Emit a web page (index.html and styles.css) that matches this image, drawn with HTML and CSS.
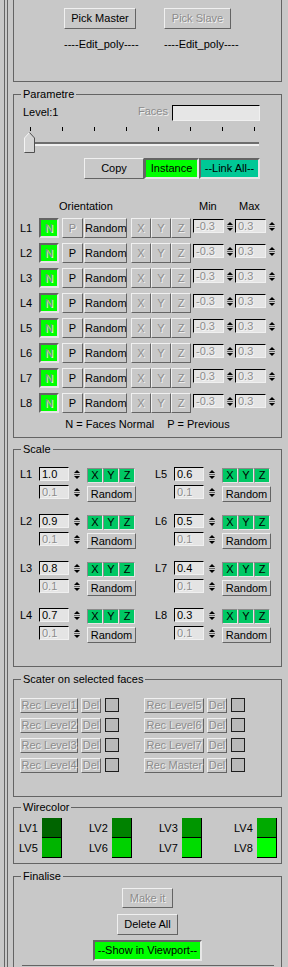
FILE: index.html
```html
<!DOCTYPE html>
<html lang="en">
<head>
<meta charset="UTF-8" />
<meta name="viewport" content="width=device-width, initial-scale=1" />
<title>Scatter Levels</title>
<link rel="stylesheet" href="styles.css">
</head>
<body>
<div class="rollout">
<div class="rollout-inner">

  <div class="group group-top">
    <div class="pick-row">
      <div class="pick-col">
        <button class="btn pick-master">Pick Master</button>
        <span class="pick-name">----Edit_poly----</span>
      </div>
      <div class="pick-col">
        <button class="btn pick-slave" disabled>Pick Slave</button>
        <span class="pick-name">----Edit_poly----</span>
      </div>
    </div>
  </div>

  <div class="group group-param">
    <span class="group-title">Parametre</span>
    <div class="level-row">
      <span class="level-label">Level:1</span>
      <span class="faces-label">Faces</span>
      <span class="faces-box"></span>
    </div>
    <div class="ticks"><i></i><i></i><i></i><i></i><i></i><i></i><i></i><i></i></div>
    <div class="slider">
      <svg class="thumb" width="11" height="21" viewBox="0 0 11 21">
        <path d="M0.5 20.5V6L5.5 0.5L10.5 6V20.5Z" fill="#d4d4d4"/>
        <path d="M0.5 20V6L5.5 0.5" fill="none" stroke="#f4f4f4"/>
        <path d="M5.5 0.5L10.5 6V20.5H0.5" fill="none" stroke="#505050"/>
      </svg>
      <div class="track"></div>
    </div>
    <div class="mode-row">
      <button class="btn copy">Copy</button>
      <button class="btn on instance">Instance</button>
      <button class="btn on link-all">--Link All--</button>
    </div>
    <div class="orient-head">
      <span class="h-orient">Orientation</span>
      <span class="h-min">Min</span>
      <span>Max</span>
    </div>
    <div class="orows">
      <div class="orow">
        <span class="lbl">L1</span>
        <button class="btn on n" disabled>N</button>
        <button class="btn p" disabled>P</button>
        <button class="btn rnd">Random</button>
        <button class="btn ax" disabled>X</button><button class="btn ax" disabled>Y</button><button class="btn ax" disabled>Z</button>
        <span class="field off">-0.3</span><span class="spin"></span>
        <span class="field off">0.3</span><span class="spin"></span>
      </div>
      <div class="orow">
        <span class="lbl">L2</span>
        <button class="btn on n" disabled>N</button>
        <button class="btn p">P</button>
        <button class="btn rnd">Random</button>
        <button class="btn ax" disabled>X</button><button class="btn ax" disabled>Y</button><button class="btn ax" disabled>Z</button>
        <span class="field off">-0.3</span><span class="spin"></span>
        <span class="field off">0.3</span><span class="spin"></span>
      </div>
      <div class="orow">
        <span class="lbl">L3</span>
        <button class="btn on n" disabled>N</button>
        <button class="btn p">P</button>
        <button class="btn rnd">Random</button>
        <button class="btn ax" disabled>X</button><button class="btn ax" disabled>Y</button><button class="btn ax" disabled>Z</button>
        <span class="field off">-0.3</span><span class="spin"></span>
        <span class="field off">0.3</span><span class="spin"></span>
      </div>
      <div class="orow">
        <span class="lbl">L4</span>
        <button class="btn on n" disabled>N</button>
        <button class="btn p">P</button>
        <button class="btn rnd">Random</button>
        <button class="btn ax" disabled>X</button><button class="btn ax" disabled>Y</button><button class="btn ax" disabled>Z</button>
        <span class="field off">-0.3</span><span class="spin"></span>
        <span class="field off">0.3</span><span class="spin"></span>
      </div>
      <div class="orow">
        <span class="lbl">L5</span>
        <button class="btn on n" disabled>N</button>
        <button class="btn p">P</button>
        <button class="btn rnd">Random</button>
        <button class="btn ax" disabled>X</button><button class="btn ax" disabled>Y</button><button class="btn ax" disabled>Z</button>
        <span class="field off">-0.3</span><span class="spin"></span>
        <span class="field off">0.3</span><span class="spin"></span>
      </div>
      <div class="orow">
        <span class="lbl">L6</span>
        <button class="btn on n" disabled>N</button>
        <button class="btn p">P</button>
        <button class="btn rnd">Random</button>
        <button class="btn ax" disabled>X</button><button class="btn ax" disabled>Y</button><button class="btn ax" disabled>Z</button>
        <span class="field off">-0.3</span><span class="spin"></span>
        <span class="field off">0.3</span><span class="spin"></span>
      </div>
      <div class="orow">
        <span class="lbl">L7</span>
        <button class="btn on n" disabled>N</button>
        <button class="btn p">P</button>
        <button class="btn rnd">Random</button>
        <button class="btn ax" disabled>X</button><button class="btn ax" disabled>Y</button><button class="btn ax" disabled>Z</button>
        <span class="field off">-0.3</span><span class="spin"></span>
        <span class="field off">0.3</span><span class="spin"></span>
      </div>
      <div class="orow">
        <span class="lbl">L8</span>
        <button class="btn on n" disabled>N</button>
        <button class="btn p">P</button>
        <button class="btn rnd">Random</button>
        <button class="btn ax" disabled>X</button><button class="btn ax" disabled>Y</button><button class="btn ax" disabled>Z</button>
        <span class="field off">-0.3</span><span class="spin"></span>
        <span class="field off">0.3</span><span class="spin"></span>
      </div>
    </div>
    <div class="note"><span>N = Faces Normal</span><span>P = Previous</span></div>
  </div>

  <div class="group group-scale">
    <span class="group-title">Scale</span>
    <div class="scale-grid">
      <div class="sblock">
        <div class="srow"><span class="slbl">L1</span><span class="field sval">1.0</span><span class="spin"></span>
          <div class="xyz"><button class="btn g">X</button><button class="btn g">Y</button><button class="btn g">Z</button></div></div>
        <div class="srow srow2"><span class="field sval off">0.1</span><span class="spin"></span><button class="btn srnd">Random</button></div>
      </div>
      <div class="sblock">
        <div class="srow"><span class="slbl">L5</span><span class="field sval">0.6</span><span class="spin"></span>
          <div class="xyz"><button class="btn g">X</button><button class="btn g">Y</button><button class="btn g">Z</button></div></div>
        <div class="srow srow2"><span class="field sval off">0.1</span><span class="spin"></span><button class="btn srnd">Random</button></div>
      </div>
      <div class="sblock">
        <div class="srow"><span class="slbl">L2</span><span class="field sval">0.9</span><span class="spin"></span>
          <div class="xyz"><button class="btn g">X</button><button class="btn g">Y</button><button class="btn g">Z</button></div></div>
        <div class="srow srow2"><span class="field sval off">0.1</span><span class="spin"></span><button class="btn srnd">Random</button></div>
      </div>
      <div class="sblock">
        <div class="srow"><span class="slbl">L6</span><span class="field sval">0.5</span><span class="spin"></span>
          <div class="xyz"><button class="btn g">X</button><button class="btn g">Y</button><button class="btn g">Z</button></div></div>
        <div class="srow srow2"><span class="field sval off">0.1</span><span class="spin"></span><button class="btn srnd">Random</button></div>
      </div>
      <div class="sblock">
        <div class="srow"><span class="slbl">L3</span><span class="field sval">0.8</span><span class="spin"></span>
          <div class="xyz"><button class="btn g">X</button><button class="btn g">Y</button><button class="btn g">Z</button></div></div>
        <div class="srow srow2"><span class="field sval off">0.1</span><span class="spin"></span><button class="btn srnd">Random</button></div>
      </div>
      <div class="sblock">
        <div class="srow"><span class="slbl">L7</span><span class="field sval">0.4</span><span class="spin"></span>
          <div class="xyz"><button class="btn g">X</button><button class="btn g">Y</button><button class="btn g">Z</button></div></div>
        <div class="srow srow2"><span class="field sval off">0.1</span><span class="spin"></span><button class="btn srnd">Random</button></div>
      </div>
      <div class="sblock">
        <div class="srow"><span class="slbl">L4</span><span class="field sval">0.7</span><span class="spin"></span>
          <div class="xyz"><button class="btn g">X</button><button class="btn g">Y</button><button class="btn g">Z</button></div></div>
        <div class="srow srow2"><span class="field sval off">0.1</span><span class="spin"></span><button class="btn srnd">Random</button></div>
      </div>
      <div class="sblock">
        <div class="srow"><span class="slbl">L8</span><span class="field sval">0.3</span><span class="spin"></span>
          <div class="xyz"><button class="btn g">X</button><button class="btn g">Y</button><button class="btn g">Z</button></div></div>
        <div class="srow srow2"><span class="field sval off">0.1</span><span class="spin"></span><button class="btn srnd">Random</button></div>
      </div>
    </div>
  </div>

  <div class="group group-scater">
    <span class="group-title">Scater on selected faces</span>
    <div class="rec-grid">
      <div class="rec"><button class="btn rec-btn" disabled>Rec Level1</button><button class="btn del" disabled>Del</button><span class="chk"></span></div>
      <div class="rec"><button class="btn rec-btn" disabled>Rec Level5</button><button class="btn del" disabled>Del</button><span class="chk"></span></div>
      <div class="rec"><button class="btn rec-btn" disabled>Rec Level2</button><button class="btn del" disabled>Del</button><span class="chk"></span></div>
      <div class="rec"><button class="btn rec-btn" disabled>Rec Level6</button><button class="btn del" disabled>Del</button><span class="chk"></span></div>
      <div class="rec"><button class="btn rec-btn" disabled>Rec Level3</button><button class="btn del" disabled>Del</button><span class="chk"></span></div>
      <div class="rec"><button class="btn rec-btn" disabled>Rec Level7</button><button class="btn del" disabled>Del</button><span class="chk"></span></div>
      <div class="rec"><button class="btn rec-btn" disabled>Rec Level4</button><button class="btn del" disabled>Del</button><span class="chk"></span></div>
      <div class="rec"><button class="btn rec-btn" disabled>Rec Master</button><button class="btn del" disabled>Del</button><span class="chk"></span></div>
    </div>
  </div>

  <div class="group group-wire">
    <span class="group-title">Wirecolor</span>
    <div class="wire-row">
      <div class="wcol"><span>LV1</span><span class="sw lv1"></span><span>LV5</span><span class="sw lv5"></span></div>
      <div class="wcol"><span>LV2</span><span class="sw lv2"></span><span>LV6</span><span class="sw lv6"></span></div>
      <div class="wcol wide"><span>LV3</span><span class="sw lv3"></span><span>LV7</span><span class="sw lv7"></span></div>
      <div class="wcol last"><span>LV4</span><span class="sw lv4"></span><span>LV8</span><span class="sw lv8"></span></div>
    </div>
  </div>

  <div class="group group-final">
    <span class="group-title">Finalise</span>
    <div class="final-col">
      <button class="btn make" disabled>Make it</button>
      <button class="btn delete-all">Delete All</button>
      <button class="btn on show">--Show in Viewport--</button>
      <div class="progress"></div>
    </div>
  </div>

</div>
</div>
</body>
</html>
```

FILE: styles.css
```css
* {
  box-sizing: border-box;
}
body {
  margin: 0;
  background: #c8c8c8;
  font-family: "Liberation Sans", Arial, sans-serif;
  font-size: 11px;
  line-height: 13px;
  color: #000;
  overflow: hidden;
}

/* rollout frame */
.rollout {
  margin-left: 4px;
  padding-left: 2px;
  border-left: 1px solid #646464;
  min-height: 967px;
}
.rollout-inner {
  padding: 0 6px 0 5px;
  border-left: 1px solid #646464;
  min-height: 967px;
}

/* group boxes */
.group {
  position: relative;
  border: 1px solid #646464;
}
.group-title {
  position: absolute;
  top: -7px;
  left: 7px;
  padding: 0 2px;
  background: #c8c8c8;
  white-space: nowrap;
}
.group-top {
  border-top: none;
  height: 82px;
}
.group-param {
  margin-top: 12px;
  height: 344px;
  padding-top: 10px;
}
.group-scale {
  margin-top: 11px;
  height: 218px;
  padding-top: 17px;
}
.group-scater {
  margin-top: 12px;
  height: 118px;
  padding-top: 18px;
}
.group-wire {
  margin-top: 10px;
  height: 57px;
  padding-top: 10px;
}
.group-final {
  margin-top: 12px;
  height: 130px;
  padding-top: 11px;
}

/* buttons */
.btn {
  height: 21px;
  margin: 0;
  padding: 0;
  font: inherit;
  line-height: 13px;
  color: #000;
  background: #c8c8c8;
  border: 1px solid;
  border-color: #f0f0f0 #646464 #646464 #f0f0f0;
  white-space: nowrap;
  overflow: visible;
}
.btn:disabled {
  color: #8c8c8c;
  text-shadow: 1px 1px 0 #f2f2f2;
}
.btn.on {
  background: #00ff00;
  border: 2px solid;
  border-color: #646464 #e6e6e6 #e6e6e6 #646464;
}
.btn.on:disabled {
  color: #8a8a8a;
  text-shadow: 1px 1px 0 #dcffdc;
}

/* edit fields and spinners */
.field {
  display: block;
  width: 31px;
  height: 14px;
  padding-left: 2px;
  line-height: 12px;
  background: #e4e4e4;
  border: 1px solid;
  border-color: #000 #f0f0f0 #f0f0f0 #000;
  white-space: nowrap;
}
.field.off {
  color: #8c8c8c;
  text-shadow: 1px 1px 0 #f6f6f6;
}
.spin {
  display: flex;
  flex-direction: column;
  align-items: center;
  justify-content: center;
  gap: 3px;
  width: 9px;
  height: 14px;
  background: linear-gradient(#646464, #646464) center / 6px 1px no-repeat;
}
.spin::before,
.spin::after {
  content: "";
  border-left: 3px solid transparent;
  border-right: 3px solid transparent;
}
.spin::before {
  border-bottom: 3px solid #000;
}
.spin::after {
  border-top: 3px solid #000;
}

/* pick master / slave */
.pick-row {
  display: flex;
  padding: 8px 0 0 50px;
}
.pick-col {
  display: flex;
  flex-direction: column;
  align-items: flex-start;
  width: 100px;
}
.pick-master {
  width: 72px;
}
.pick-slave {
  width: 67px;
}
.pick-name {
  margin-top: 9px;
}

/* parametre */
.level-row {
  display: flex;
  align-items: flex-start;
  height: 16px;
  padding: 0 21px 0 9px;
}
.level-label {
  margin-top: 1px;
}
.faces-label {
  margin: 0 4px 0 auto;
  color: #8c8c8c;
  text-shadow: 1px 1px 0 #f2f2f2;
}
.faces-box {
  width: 88px;
  height: 16px;
  background: #e6e6e6;
  border: 1px solid;
  border-color: #000 #f0f0f0 #f0f0f0 #000;
}
.ticks {
  display: flex;
  justify-content: space-between;
  width: 225px;
  height: 4px;
  margin: 6px 0 0 16px;
}
.ticks i {
  width: 1px;
  height: 4px;
  background: #000;
}
.slider {
  display: flex;
  width: 235px;
  height: 21px;
  margin: 1px 0 0 10px;
}
.thumb {
  display: block;
  flex: none;
}
.track {
  flex: 1;
  height: 4px;
  margin-top: 10px;
  border-top: 2px solid #6e6e6e;
  border-bottom: 2px solid #f0f0f0;
}
.mode-row {
  display: flex;
  margin: 5px 0 0 70px;
}
.copy {
  width: 60px;
}
.instance {
  width: 55px;
}
.btn.link-all {
  width: 61px;
  background: #00c896;
}
.orient-head {
  display: flex;
  height: 13px;
  margin-top: 21px;
}
.h-orient {
  width: 140px;
  margin-left: 45px;
}
.h-min {
  width: 40px;
}
.orows {
  margin-top: 5px;
}
.orow {
  display: flex;
  align-items: flex-start;
  height: 25px;
}
.lbl {
  width: 25px;
  padding-left: 6px;
  line-height: 20px;
}
.orow .btn {
  height: 20px;
}
.n {
  width: 20px;
  margin-right: 3px;
}
.p {
  width: 21px;
  margin-right: 1px;
}
.rnd {
  width: 43px;
  margin-right: 4px;
}
.ax {
  width: 20px;
}
.ax:nth-of-type(6) {
  margin-right: 2px;
}
.orow .field {
  margin-top: 1px;
}
.orow .spin {
  margin: 1px 1px 0;
}
.note {
  text-align: center;
}
.note span + span {
  margin-left: 13px;
}

/* scale */
.scale-grid {
  display: grid;
  grid-template-columns: 135px 1fr;
  row-gap: 12px;
  padding-left: 6px;
}
.srow {
  display: flex;
  align-items: flex-start;
  height: 18px;
}
.srow2 {
  height: 17px;
  padding-left: 19px;
}
.slbl {
  width: 19px;
  line-height: 14px;
}
.sval {
  width: 30px;
}
.srow .spin {
  margin-left: 3px;
}
.xyz {
  display: flex;
  margin: 1px 0 0 6px;
}
.g {
  width: 16px;
  height: 15px;
  background: #00c864;
  border-color: #8a8a8a #e6e6e6 #e6e6e6 #8a8a8a;
}
.srnd {
  width: 49px;
  height: 16px;
  margin: 1px 0 0 6px;
}

/* scater */
.rec-grid {
  display: grid;
  grid-template-columns: 124px 1fr;
  row-gap: 5px;
  padding-left: 6px;
}
.rec {
  display: flex;
  align-items: flex-start;
}
.rec-btn {
  width: 58px;
  height: 15px;
}
.rec:nth-child(even) .rec-btn {
  width: 60px;
}
.del {
  width: 20px;
  height: 15px;
  margin-left: 3px;
}
.chk {
  width: 14px;
  height: 14px;
  margin-left: 4px;
  background: #b9b9b9;
  border: 1px solid #1e1e1e;
}

/* wirecolor */
.wire-row {
  display: flex;
  padding-left: 5px;
}
.wcol {
  display: grid;
  flex: none;
  grid-template-columns: 23px 20px;
  grid-auto-rows: 20px;
  align-items: center;
  width: 70px;
}
.wcol.wide {
  width: 75px;
}
.wcol.last {
  width: 43px;
}
.sw {
  align-self: stretch;
  border-right: 1px solid #000;
  border-bottom: 1px solid #000;
}
.lv1 { background: #006400; }
.lv2 { background: #008200; }
.lv3 { background: #009600; }
.lv4 { background: #00aa00; }
.lv5 { background: #00b400; }
.lv6 { background: #00d200; }
.lv7 { background: #00dc00; }
.lv8 { background: #00ff00; }

/* finalise */
.final-col {
  display: flex;
  flex-direction: column;
  align-items: center;
}
.make {
  width: 51px;
  height: 20px;
}
.delete-all {
  width: 61px;
  margin-top: 6px;
}
.show {
  width: 109px;
  margin-top: 5px;
}
.progress {
  align-self: stretch;
  height: 20px;
  margin: 4px 7px 0 8px;
  border-top: 1px solid #646464;
}
```
